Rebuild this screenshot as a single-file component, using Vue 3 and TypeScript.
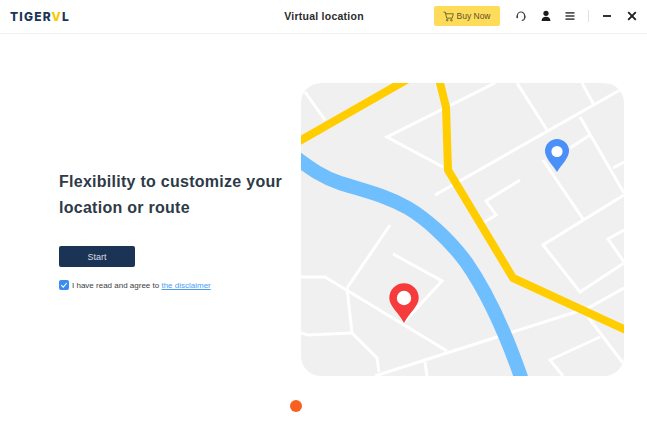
<script setup lang="ts">
// white streets on the map, in page coordinates of the map box
const streets: string[] = [
  '305,92 325,120',
  '495,83 387,137 443,167',
  '435,195 620,90',
  '517,83 547,130',
  '582,83 594,105',
  '580,117 624,193',
  '543,160 583,219',
  '570,148 590,135',
  '520,180 486,201 496,215 483,223',
  '624,195 543,245 580,292 624,263',
  '624,230 608,239 624,262',
  '613,168 624,162',
  '624,288 588,308 375,376',
  '588,317 623,363',
  '600,337 550,360 563,376',
  '390,225 347,288',
  '301,277 325,277 447,351',
  '347,288 352,333 377,358 379,372',
  '301,333 308,335 352,333',
  '425,362 427,376',
  '393,254 442,281 403,323',
]

const river = 'M295 157 C310 168 322 177 340 183 C362 190 385 195 408 208 C425 218 448 238 466 262 C482 285 503 325 522 380'
</script>

<template>
  <div class="page">
    <header class="topbar">
      <div class="logo">TIGER<span class="logo__v">V</span>L</div>
      <div class="topbar__title">Virtual location</div>
      <div class="topbar__tools">
        <button class="buy">
          <svg class="buy__cart" viewBox="0 0 12 12" fill="none" stroke="#5a5232" stroke-width="0.9">
            <path d="M0.5 1.2h2l1.5 6.6h6l1.3-4.8H3" stroke-linejoin="round" />
            <circle cx="4.6" cy="10" r="0.9" />
            <circle cx="9.2" cy="10" r="0.9" />
          </svg>
          Buy Now
        </button>
        <svg class="tool tool--first" viewBox="0 0 12 12" fill="none" stroke="#444" stroke-width="1.2">
          <path d="M2.4 8V5.6a3.6 3.6 0 0 1 7.2 0V8" />
          <path d="M9.6 8a2.8 2.8 0 0 1-2.8 2.4" />
          <rect x="1.5" y="5.6" width="1.3" height="2.6" fill="#444" stroke="none" />
          <rect x="9.2" y="5.6" width="1.3" height="2.6" fill="#444" stroke="none" />
        </svg>
        <svg class="tool tool--user" viewBox="0 0 12 12" fill="#1c1c1c">
          <circle cx="6" cy="3.3" r="2.6" />
          <path d="M1.6 11 C1.6 8 3.5 6.8 6 6.8 S10.4 8 10.4 11 Z" />
        </svg>
        <svg class="tool" viewBox="0 0 12 12" fill="#2b2b2b">
          <rect x="1.500" y="2.200" width="9" height="1.400" />
          <rect x="1.500" y="5.300" width="9" height="1.400" />
          <rect x="1.500" y="8.400" width="9" height="1.400" />
        </svg>
        <span class="divider"></span>
        <svg class="tool" viewBox="0 0 12 12" fill="#1c1c1c">
          <rect x="2" y="5.1" width="8" height="1.8" />
        </svg>
        <svg class="tool tool--close" viewBox="0 0 12 12" fill="none" stroke="#1c1c1c" stroke-width="1.8">
          <path d="M2.2 2.2l7.6 7.6M9.8 2.2l-7.6 7.6" />
        </svg>
      </div>
    </header>

    <main class="content">
      <section class="intro">
        <h1 class="intro__title">Flexibility to customize your<br />location or route</h1>
        <button class="start">Start</button>
        <label class="agree">
          <span class="agree__box">
            <svg viewBox="0 0 10 10" fill="none" stroke="#fff" stroke-width="1.1">
              <path d="M2.2 5.2l2 2 3.6-4.2" />
            </svg>
          </span>
          I have read and agree to&nbsp;<a class="agree__link">the disclaimer</a>
        </label>
      </section>

      <svg class="map" viewBox="301 83 323 293">
        <g fill="none" stroke="#fff" stroke-width="3">
          <polyline v-for="s in streets" :key="s" :points="s" />
        </g>
        <path :d="river" fill="none" stroke="#6fbfff" stroke-width="14" />
        <g fill="none" stroke="#ffcd00" stroke-width="8" stroke-linejoin="round">
          <path d="M296 143 L408 79" />
          <path d="M439 79 L446 107 L448 170 L513 278 L628 331" />
        </g>
        <path d="M557 172 C552 164 545 158 545 151 A12 12 0 0 1 569 151 C569 158 562 164 557 172 Z" fill="#4a90f8" />
        <circle cx="557" cy="151.5" r="5.6" fill="#fff" />
        <path d="M404 323 C398 312 389.3 306 389.3 298 A14.7 14.7 0 0 1 418.7 298 C418.7 306 410 312 404 323 Z" fill="#f53b3b" />
        <circle cx="404" cy="298" r="7.2" fill="#fff" />
      </svg>
    </main>

    <span class="dot"></span>
  </div>
</template>

<style scoped>
.page {
  position: relative;
  width: 647px;
  height: 423px;
  overflow: hidden;
  background: #fff;
  font-family: "Liberation Sans", Arial, sans-serif;
}

.topbar {
  height: 34px;
  box-sizing: border-box;
  border-bottom: 1px solid #f0f0f0;
  display: grid;
  grid-template-columns: 1fr auto 1fr;
  align-items: center;
  padding: 0 9px 1px 10px;
}

.logo {
  font-family: Inter, "Liberation Sans", sans-serif;
  font-size: 12px;
  font-weight: 800;
  letter-spacing: 1.2px;
  color: #1c3557;
}
.logo__v { color: #fcc800; }

.topbar__title {
  font-size: 10.5px;
  font-weight: 700;
  letter-spacing: 0.25px;
  color: #2b2b2b;
}

.topbar__tools {
  display: flex;
  align-items: center;
  justify-content: flex-end;
  gap: 12px;
}

.buy {
  width: 66px;
  height: 20px;
  padding: 0;
  border: 0;
  border-radius: 2px;
  background: #fedc5a;
  color: #5a5232;
  font-family: inherit;
  font-size: 8.5px;
  display: flex;
  align-items: center;
  justify-content: center;
  gap: 2px;
}
.buy__cart { width: 11px; height: 11px; }

.tool { width: 12px; height: 12px; flex: none; }
.tool--first { margin-left: 3px; }
.tool--user { margin-left: 1px; }
.tool--close { margin-left: 1px; }

.divider {
  width: 1px;
  height: 12px;
  background: #dde2e8;
}

.content {
  display: flex;
  justify-content: space-between;
  padding: 49px 23px 0 59px;
}

.intro { padding-top: 86px; }

.intro__title {
  margin: 0;
  font-size: 16px;
  line-height: 26px;
  font-weight: 700;
  letter-spacing: 0.27px;
  color: #2f3a48;
  white-space: nowrap;
}

.start {
  display: block;
  width: 76px;
  height: 21px;
  margin-top: 25px;
  padding: 0;
  border: 0;
  border-radius: 2px;
  background: #1b3455;
  color: #d5dbe3;
  font-family: inherit;
  font-size: 9px;
}

.agree {
  display: flex;
  align-items: center;
  margin-top: 13px;
  font-size: 8px;
  color: #3c3c3c;
  white-space: nowrap;
}
.agree__box {
  width: 10px;
  height: 10px;
  margin-right: 3px;
  border-radius: 2px;
  background: #3a8cf0;
  display: flex;
}
.agree__link {
  color: #4a9cf5;
  text-decoration: underline;
}

.map {
  width: 323px;
  height: 293px;
  flex: none;
  border-radius: 20px;
  background: #f0f0f0;
}

.dot {
  position: absolute;
  left: 290px;
  top: 400px;
  width: 12px;
  height: 12px;
  border-radius: 50%;
  background: #f96020;
}
</style>
